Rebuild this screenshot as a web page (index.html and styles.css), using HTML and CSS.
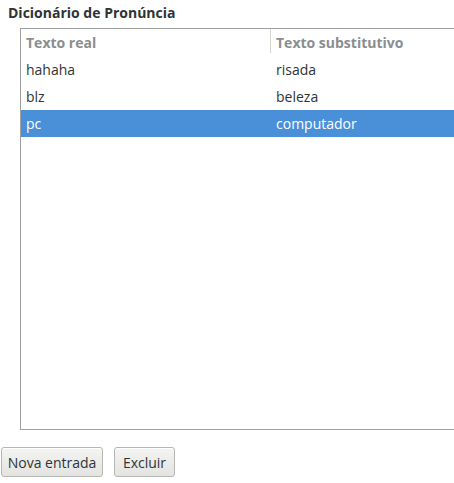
FILE: index.html
```html
<!DOCTYPE html>
<html lang="pt">
<head>
<meta charset="utf-8">
<link rel="stylesheet" href="styles.css">
</head>
<body>
<div class="page">
  <div class="title">Dicionário de Pronúncia</div>
  <div class="frame">
    <div class="row head">
      <div class="cell c1">Texto real</div>
      <div class="cell c2"><span class="sep"></span>Texto substitutivo</div>
    </div>
    <div class="row">
      <div class="cell c1">hahaha</div>
      <div class="cell c2">risada</div>
    </div>
    <div class="row">
      <div class="cell c1">blz</div>
      <div class="cell c2">beleza</div>
    </div>
    <div class="row selected">
      <div class="cell c1">pc</div>
      <div class="cell c2">computador</div>
    </div>
  </div>
  <div class="buttons">
    <button class="btn btn-new">Nova entrada</button>
    <button class="btn btn-del">Excluir</button>
  </div>
</div>
</body>
</html>
```
FILE: styles.css
```css
html, body {
  margin: 0;
  padding: 0;
  background: #ffffff;
  overflow: hidden;
}
.page {
  width: 454px;
  height: 483px;
  font-family: "Open Sans", "Noto Sans", sans-serif;
  font-size: 14px;
  color: #2e3436;
  overflow: hidden;
}
.title {
  font-weight: bold;
  padding: 4px 0 0 8px;
  height: 28px;
  line-height: 18px;
  box-sizing: border-box;
}
.frame {
  margin-left: 20px;
  width: 440px;
  height: 402px;
  box-sizing: border-box;
  border: 1px solid #a0a0a0;
  border-right: none;
  display: flex;
  flex-direction: column;
}
.row {
  display: flex;
  height: 27px;
  align-items: center;
}
.cell {
  box-sizing: border-box;
  white-space: nowrap;
  height: 27px;
  line-height: 27px;
}
.c1 {
  width: 249px;
  padding-left: 5px;
}
.c2 {
  flex: 1;
  padding-left: 6px;
  position: relative;
}
.head .cell {
  color: #8b8e8f;
  font-weight: bold;
}
.sep {
  position: absolute;
  left: 0;
  top: 0;
  height: 24px;
  width: 1px;
  background: #d3d7cf;
}
.selected {
  background: #4a90d9;
  color: #ffffff;
}
.buttons {
  display: flex;
  gap: 11px;
  margin-top: 17px;
  padding-left: 1px;
}
.btn {
  font-family: "Open Sans", "Noto Sans", sans-serif;
  font-size: 14px;
  color: #2e3436;
  height: 30px;
  padding: 0;
  border: 1px solid #b6b6b3;
  border-radius: 3px;
  background: linear-gradient(#f4f4f3, #e3e3e1);
  box-shadow: inset 0 1px #ffffff;
}
.btn-new {
  width: 102px;
}
.btn-del {
  width: 61px;
}
```
